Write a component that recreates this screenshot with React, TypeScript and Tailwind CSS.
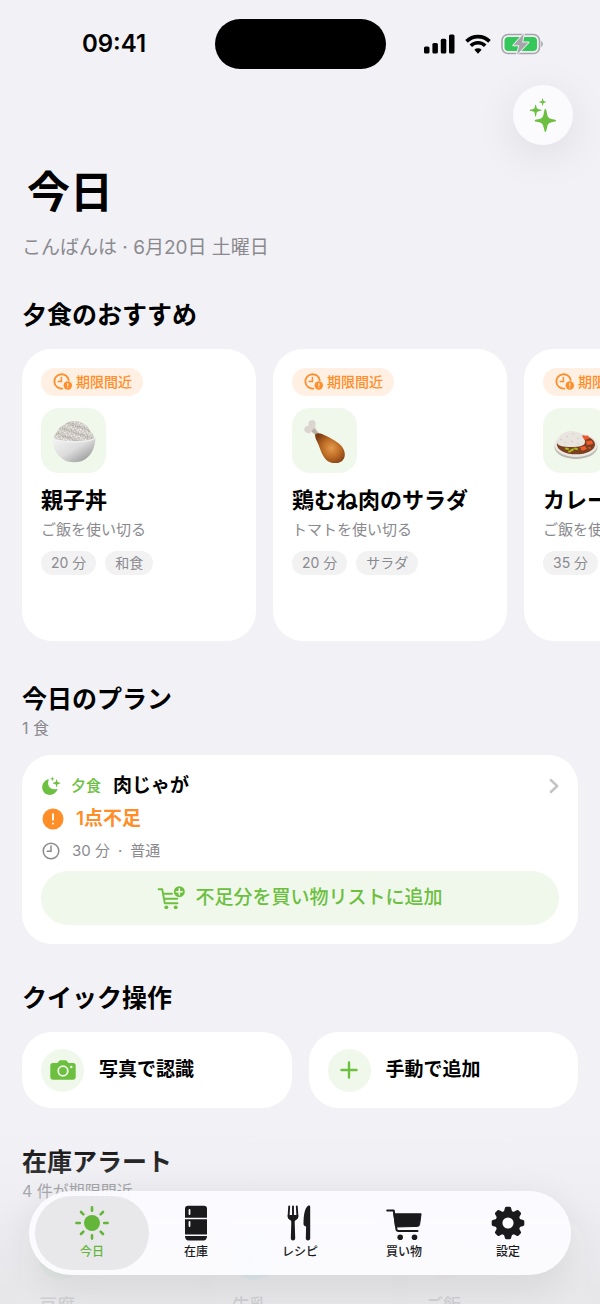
import React, { useState } from 'react';
import { Leaf, Milk, CupSoda } from 'lucide-react';

type IconProps = { className?: string };

interface Recipe {
  id: string;
  title: string;
  subtitle: string;
  tags: string[];
  art: React.ReactNode;
}

function Sparkles({ className }: IconProps) {
  return (
    <svg viewBox="0 0 28 36" fill="currentColor" className={className}>
      <path d="M16.500 11.500c.8 0 1.100 2.200 1.700 5 .9 4.300 1.900 5.300 6.100 6.100 2.300.5 3.500.7 3.500 1.400s-1.200.9-3.500 1.400c-4.200.8-5.200 1.800-6.100 6.100-.6 2.800-.9 4.500-1.700 4.500s-1.100-1.700-1.700-4.500c-.9-4.300-1.900-5.300-6.100-6.100-2.300-.5-3.500-.7-3.500-1.400s1.200-.9 3.500-1.400c4.200-.8 5.200-1.800 6.100-6.100.6-2.800.9-5 1.700-5z" />
      <path d="M6.200 7c.6 0 .8 3.300 1.500 4.200.8.800 4.800 1.200 4.800 1.800s-4 1-4.800 1.800c-.7.9-.9 5-1.500 5s-.8-4.100-1.500-5C3.900 14 0 13.600 0 13s3.900-1 4.700-1.800C5.400 10.300 5.600 7 6.200 7z" />
      <path d="M13.600.3c.4 0 .6 2.300 1 2.800.5.500 2.900.700 2.900 1.100s-2.400.6-2.900 1.100c-.4.5-.6 3-1 3s-.6-2.500-1-3c-.5-.5-2.800-.7-2.800-1.100s2.300-.6 2.800-1.100c.4-.5.6-2.800 1-2.800z" />
    </svg>
  );
}

function ClockAlert({ className }: IconProps) {
  return (
    <svg viewBox="0 0 20 18" fill="none" stroke="currentColor" strokeWidth="1.800" strokeLinecap="round" className={className}>
      <path d="M15.700 7.200A7.200 7.200 0 1 0 9.300 15.600" />
      <path d="M8.400 4.500V8.600H5.200" strokeWidth="1.500" />
      <circle cx="14.800" cy="12.500" r="4.200" fill="currentColor" stroke="none" />
      <path d="M14.800 10.300v2.500M14.800 14.500v.1" stroke="#fff0e3" strokeWidth="1.200" />
    </svg>
  );
}

// Scattered rice grains, clipped to the mound
const grains = Array.from({ length: 230 }, (_, i) => ({
  x: (i * 17.37) % 42 + 1,
  y: (i * 7.91) % 22 + 1,
  a: (i * 67) % 180,
  fill: ['#f1efeb', '#dedad5', '#aaa59e', '#e9e6e1'][i % 4],
}));

function RiceBowl() {
  return (
    <svg viewBox="0 0 44 44" className="size-11">
      <defs>
        <linearGradient id="bowl" x1="0" y1="0" x2="1" y2="1">
          <stop offset="0" stopColor="#f6f6f6" />
          <stop offset=".5" stopColor="#dcdcdc" />
          <stop offset="1" stopColor="#858585" />
        </linearGradient>
        <clipPath id="mound">
          <path d="M2 19c0-3 1.500-4 3-6 2-5 6-6 8-8 3-2 6-3 10-3 4 0 6 1 9 3 4 2 5 5 7 8 2 2 3 3 3 6 0 4-40 4-40 0z" />
        </clipPath>
      </defs>
      <g clipPath="url(#mound)">
        <rect width="44" height="24" fill="#c9c5bf" />
        {grains.map((g, i) => (
          <ellipse key={i} cx={g.x} cy={g.y} rx="1.200" ry=".5" fill={g.fill} transform={`rotate(${g.a} ${g.x} ${g.y})`} />
        ))}
      </g>
      <path d="M.5 17.500c0 3 9 5 21.500 5s21.500-2 21.500-5C43.500 30 38 38 31 41.500c-4 2.300-14 2.300-18 0C6 38 .5 30 .5 17.500z" fill="url(#bowl)" />
      <path d="M.5 17.500c0 3.500 9 5.500 21.500 5.500s21.500-2 21.500-5.500" fill="none" stroke="#f4f4f4" strokeWidth="1" />
    </svg>
  );
}

function Drumstick() {
  return (
    <svg viewBox="0 0 44 44" className="size-11">
      <defs>
        <radialGradient id="meat" cx=".55" cy=".5" r=".6">
          <stop offset="0" stopColor="#e39a4e" />
          <stop offset=".5" stopColor="#bd6c24" />
          <stop offset="1" stopColor="#7c3b12" />
        </radialGradient>
      </defs>
      <path d="M14 17 8.500 13c-2 2-6 1.500-7-1.500C.5 8.500 3 6.500 5.500 7c-.5-3 .5-6 3.500-6 3.500 0 4.500 3.500 3 7l4.500 7z" fill="#dcd5cf" />
      <path d="M8.500 12.500 14 17l2-2-5-6" fill="#b9aea6" />
      <path d="M12 15.500c2-1.600 4.500-1.800 7-.5 5 2.500 14 6 19.500 12 4.500 5.500 4 11.500 1 14.500-3.500 3.500-10.500 3.500-15 .5-6-5-7-12.500-10-18.500-1-2.500-2.500-4.500-2.500-8z" fill="url(#meat)" />
    </svg>
  );
}

function Curry() {
  return (
    <svg viewBox="0 0 44 44" className="size-11">
      <ellipse cx="22" cy="28" rx="21.500" ry="12" fill="#b9b5b1" />
      <ellipse cx="22" cy="26" rx="21.500" ry="12" fill="#ebe8e4" />
      <ellipse cx="22" cy="25.500" rx="19" ry="9.800" fill="#7b4020" />
      <path d="M3 23c1-6 6-11 14-11 9 0 14 5 14 11 0 4-6 5-14 5S3 27 3 23z" fill="#e9e5de" />
      <path d="M6 21l2-1M12 17l2 1M18 15l2-.5M23 19l2 1M10 24l2-1M17 22l2 1M25 24l-2 1" stroke="#d3cdc4" />
      <path d="M28 17l6-.5 1.500 3-5 1.500zM32 22l6-.5 1 3.500-6 1zM26 28l5-1 2 3-5 2zM34 28l3 .5-1 2z" fill="#ee5a2a" />
      <path d="M12 29.500l2 .5M17 31.500l2-1M21 29.500l2 .5M15 32.500h1" stroke="#a8b820" strokeWidth="2" strokeLinecap="round" />
    </svg>
  );
}

function MoonStars({ className }: IconProps) {
  return (
    <svg viewBox="0 0 20 20" fill="currentColor" className={className}>
      <path d="M7.200 3.200c.5-.2.8.2.6.6C5.400 9.800 9.600 14.700 16 13c.5-.1.800.2.600.6C15 17.200 12 19 8.900 19 4.500 19 1.200 15.700 1.200 11.300c0-3.700 2.300-6.800 6-8.100z" />
      <path d="M15.600 3.300c.4 0 .6 2.300 1 2.800.5.500 2.900.7 2.900 1.100s-2.400.6-2.900 1.100c-.4.5-.6 2.900-1 2.900s-.6-2.400-1-2.900c-.5-.5-2.900-.7-2.900-1.100s2.400-.6 2.900-1.100c.4-.5.6-2.800 1-2.800zM11.300.4c.2 0 .4 1.500.6 1.800.3.300 1.700.4 1.700.6s-1.400.4-1.700.6c-.2.300-.4 1.700-.6 1.700s-.4-1.400-.6-1.700c-.3-.2-1.700-.4-1.700-.6s1.400-.3 1.700-.6c.2-.3.400-1.800.6-1.800z" />
    </svg>
  );
}

function CartPlus({ className }: IconProps) {
  return (
    <svg viewBox="0 0 28 24" fill="none" stroke="currentColor" strokeWidth="1.900" strokeLinecap="round" strokeLinejoin="round" className={className}>
      <path d="M1.600 3.200H5.200L7.800 17.300H20.500M6 7.800H15M7 12.800H20.300" />
      <circle cx="9.300" cy="21.300" r="1.900" fill="currentColor" stroke="none" />
      <circle cx="18.700" cy="21.300" r="1.900" fill="currentColor" stroke="none" />
      <circle cx="22.300" cy="5.700" r="5.500" fill="currentColor" stroke="none" />
      <path d="M22.300 2.700v6M19.300 5.700h6" stroke="#f0f8ec" strokeWidth="1.600" />
    </svg>
  );
}

function Camera({ className }: IconProps) {
  return (
    <svg viewBox="0 0 26 20" className={className}>
      <path d="M3 3h4.500l1.300-1.800C9.300.6 10 .2 10.800.2h4.400c.8 0 1.500.400 2 1L18.500 3H23a2.700 2.700 0 0 1 2.700 2.700v11.100a2.900 2.900 0 0 1-2.900 2.900H3.200a2.900 2.900 0 0 1-2.900-2.900V5.700A2.700 2.700 0 0 1 3 3z" fill="currentColor" />
      <circle cx="13" cy="11" r="4.800" fill="none" stroke="#f0f8ec" strokeWidth="1.800" />
      <circle cx="21.300" cy="7" r="1.200" fill="#f0f8ec" />
    </svg>
  );
}

function Sun() {
  return (
    <svg viewBox="0 0 36 36" className="size-9" fill="currentColor" stroke="currentColor" strokeWidth="2.600" strokeLinecap="round">
      <circle cx="18" cy="18" r="8" stroke="none" />
      <path d="M18 2.400v3.400M18 30.200v3.400M2.400 18h3.400M30.200 18h3.400M7 7l2.400 2.400M26.600 26.600 29 29M7 29l2.400-2.400M26.600 9.400 29 7" />
    </svg>
  );
}

function Fridge() {
  return (
    <svg viewBox="0 0 36 36" className="size-9" fill="currentColor">
      <path d="M10 .8h16a3 3 0 0 1 3 3v8.900H7V3.800a3 3 0 0 1 3-3zM7 14.200h22v15.300H7zM7 31h22c0 2.700-1.200 4.500-3.500 4.500h-15C8.200 35.500 7 33.700 7 31z" />
      <path d="M11.500 5v4M11.500 17v4" stroke="#fbfbfe" strokeWidth="1.800" strokeLinecap="round" />
    </svg>
  );
}

function ForkKnife() {
  return (
    <svg viewBox="0 0 36 36" className="size-9" fill="currentColor">
      <path
        d="M7.200 1.500 6.600 11c-.1 2.200 1 3 4.400 3s4.500-.8 4.400-3l-.6-9.500M11 1.500V13"
        fill="none"
        stroke="currentColor"
        strokeWidth="1.900"
        strokeLinecap="round"
      />
      <path d="M5.800 10h10.400c.3 2.600-.7 4-2.300 5-.9.600-1.200 1.100-1.200 2.400l.5 15.800c0 1.300-.9 2.200-2.200 2.200s-2.200-.9-2.200-2.200l.5-15.800c0-1.300-.3-1.800-1.200-2.400-1.600-1-2.600-2.400-2.300-5z" />
      <path d="M26.300.6c1-.4 1.900.2 1.900 1.200v31.500c0 1.300-.8 2.200-2.200 2.200s-2.200-.9-2.200-2.200l.3-11.800c-1.200-.2-2.600-.9-2.600-2.500.1-8.500 1-15.600 4.800-18.400z" />
    </svg>
  );
}

function Cart() {
  return (
    <svg viewBox="0 0 36 36" className="size-9" fill="none" stroke="currentColor" strokeWidth="2" strokeLinecap="round" strokeLinejoin="round">
      <path d="M1.200 5.500h6.500L10.400 24.200c.2 1.200.8 1.900 2 1.900H31.500" />
      <path d="M8.300 8.800h26.800L33.600 19.500c-.2 1.200-.9 1.800-2.100 1.900L10 22z" fill="currentColor" strokeWidth="1" />
      <circle cx="14.200" cy="32.200" r="2.800" fill="currentColor" stroke="none" />
      <circle cx="28.500" cy="32.200" r="2.800" fill="currentColor" stroke="none" />
    </svg>
  );
}

function Gear() {
  return (
    <svg viewBox="0 0 36 36" className="size-9" fill="currentColor">
      {[0, 45, 90, 135, 180, 225, 270, 315].map((a) => (
        <path key={a} d="M13.500 8 15 2.800Q15.300 1.700 16.400 1.700h3.200q1.100 0 1.400 1.100L22.500 8z" transform={`rotate(${a} 18 18)`} />
      ))}
      <circle cx="18" cy="18" r="9.100" fill="none" stroke="currentColor" strokeWidth="7" />
    </svg>
  );
}

function Clock({ className }: IconProps) {
  return (
    <svg viewBox="0 0 18 18" fill="none" stroke="currentColor" strokeWidth="1.500" strokeLinecap="round" className={className}>
      <circle cx="9" cy="9" r="7.800" />
      <path d="M9 4v5.300H5.200" />
    </svg>
  );
}

const recipes: Recipe[] = [
  { id: 'oyakodon', title: '親子丼', subtitle: 'ご飯を使い切る', tags: ['20 分', '和食'], art: <RiceBowl /> },
  { id: 'salad', title: '鶏むね肉のサラダ', subtitle: 'トマトを使い切る', tags: ['20 分', 'サラダ'], art: <Drumstick /> },
  { id: 'curry', title: 'カレーライス', subtitle: 'ご飯を使い切る', tags: ['35 分', '和食'], art: <Curry /> },
];

const alerts = [
  { name: '豆腐', color: 'bg-[#cdebcf] text-[#58c060]', Icon: Leaf },
  { name: '牛乳', color: 'bg-[#b4f3fa] text-[#1fd0e6]', Icon: Milk },
  { name: 'ご飯', color: 'bg-[#fbe9e3] text-[#f0835c]', Icon: CupSoda },
];

const tabs = [
  { id: 'today', label: '今日', icon: <Sun /> },
  { id: 'stock', label: '在庫', icon: <Fridge /> },
  { id: 'recipes', label: 'レシピ', icon: <ForkKnife /> },
  { id: 'shopping', label: '買い物', icon: <Cart /> },
  { id: 'settings', label: '設定', icon: <Gear /> },
];

function StatusBar() {
  return (
    <div className="grid grid-cols-3 items-center pt-[19px]">
      <div className="pl-7 text-center text-2xl font-semibold">09:41</div>
      <div className="mx-auto h-[50px] w-[171px] rounded-full bg-black" />
      <div className="flex items-center justify-end gap-[10px] pr-14">
        <svg viewBox="0 0 31 20" className="h-5 w-[31px]">
          <rect x="0" y="12.500" width="5.500" height="7" rx="1.500" />
          <rect x="8.400" y="9" width="5.500" height="10.500" rx="1.500" />
          <rect x="16.800" y="4.800" width="5.500" height="14.700" rx="1.500" />
          <rect x="25" y=".5" width="5.500" height="19" rx="1.500" />
        </svg>
        <svg viewBox="0 0 26 20" className="h-5 w-[26px]" fill="none" stroke="#000" strokeWidth="3.600">
          <path d="M1.500 7.400a16.300 16.300 0 0 1 23 0" />
          <path d="M5.800 11.800a10.200 10.200 0 0 1 14.400 0" />
          <path d="M13 19.800l3.600-4a5.200 5.200 0 0 0-7.200 0z" fill="#000" stroke="none" />
        </svg>
        <svg viewBox="0 0 43 22" className="h-[22px] w-[43px]">
          <rect x="1" y="1.500" width="37.500" height="19" rx="6" fill="none" stroke="#a5a5aa" strokeWidth="1.600" />
          <rect x="3.500" y="4" width="32.500" height="14" rx="3.800" fill="#34c759" />
          <path d="M40.200 8c2.200.8 2.200 5.200 0 6z" fill="#a5a5aa" />
          <path d="M22.800 .8 12.300 12.300h6L16 21.500 27.500 9.500h-6.300z" fill="#a5a5aa" stroke="#f2f1f6" strokeWidth="1.800" strokeLinejoin="round" paintOrder="stroke" />
        </svg>
      </div>
    </div>
  );
}

function RecipeCard({ recipe }: { recipe: Recipe }) {
  return (
    <article className="h-[292px] w-[234px] shrink-0 rounded-[30px] bg-white p-[19px]">
      <div className="flex h-7 w-fit items-center gap-[3px] rounded-full bg-[#fff0e3] pl-3 pr-[11px] text-sm font-medium text-[#ff8d28]">
        <ClockAlert className="h-[18px] w-5" />
        期限間近
      </div>
      <div className="mt-3 flex size-[65px] items-center justify-center rounded-[18px] bg-[#f0f8ec]">{recipe.art}</div>
      <h3 className="mt-[13px] whitespace-nowrap text-[22px] font-bold leading-7">{recipe.title}</h3>
      <p className="mt-1 text-[15px] leading-6 text-[#8a8a8e]">{recipe.subtitle}</p>
      <div className="mt-[9px] flex gap-[9px]">
        {recipe.tags.map((tag) => (
          <span key={tag} className="flex h-6 items-center rounded-full bg-[#f2f2f3] px-[10px] text-sm text-[#8a8a8e]">
            {tag}
          </span>
        ))}
      </div>
    </article>
  );
}

function Heading({ title, note }: { title: string; note?: string }) {
  return (
    <div className="px-[22px]">
      <h2 className="text-[25px] font-bold leading-9">{title}</h2>
      {note && <p className="text-base leading-[22px] text-[#8a8a8e]">{note}</p>}
    </div>
  );
}

export default function App() {
  const [tab, setTab] = useState('today');

  return (
    <div className="relative h-screen overflow-hidden bg-[#f2f1f6] font-['Inter','Noto_Sans_CJK_JP',sans-serif] text-black" lang="ja">
      <StatusBar />
      <div className="mt-4 flex justify-end pr-[27px]">
        <button
          aria-label="AI"
          className="flex size-[60px] items-center justify-center rounded-full bg-[#fbfbfe] text-[#6cbf3f] shadow-[0_10px_44px_rgba(0,0,0,0.09)]"
        >
          <Sparkles className="h-[34px] w-7" />
        </button>
      </div>

      <header className="px-[22px]">
        <h1 className="mt-[17px] pl-[5px] text-[43px] font-bold leading-[60px]">今日</h1>
        <p className="mt-3 text-[19px] leading-7 text-[#8a8a8e]">こんばんは · 6月20日 土曜日</p>
      </header>

      <section className="mt-[35px]">
        <Heading title="夕食のおすすめ" />
        <div className="mt-4 flex gap-[17px] overflow-x-auto px-[22px] [scrollbar-width:none]">
          {recipes.map((r) => (
            <RecipeCard key={r.id} recipe={r} />
          ))}
        </div>
      </section>

      <section className="mt-10">
        <Heading title="今日のプラン" note="1 食" />
        <div className="mx-[22px] mt-4 rounded-[30px] bg-white p-[19px]">
          <div className="flex h-6 items-center">
            <MoonStars className="size-5 text-[#6cbf3f]" />
            <span className="ml-[10px] text-[15px] font-medium text-[#6cbf3f]">夕食</span>
            <span className="ml-3 text-[19px] font-bold">肉じゃが</span>
            <svg viewBox="0 0 10 16" className="ml-auto h-4 w-[10px]" fill="none" stroke="#c4c4c7" strokeWidth="2.400" strokeLinecap="round" strokeLinejoin="round">
              <path d="M1.800 2 8.200 8l-6.400 6" />
            </svg>
          </div>
          <div className="mt-[9px] flex h-6 items-center gap-3 text-[19px] font-semibold text-[#ff8d28]">
            <svg viewBox="0 0 22 22" className="ml-px size-[22px]">
              <circle cx="11" cy="11" r="10.500" fill="currentColor" />
              <path d="M11 6.200v5.600M11 15.400v.1" stroke="#fff" strokeWidth="1.900" strokeLinecap="round" />
            </svg>
            1点不足
          </div>
          <div className="mt-2 flex h-6 items-center gap-3 text-[15px] text-[#8a8a8e]">
            <Clock className="ml-px size-[18px]" />
            <div className="flex gap-2">
              <span>30 分</span>
              <span>·</span>
              <span>普通</span>
            </div>
          </div>
          <button className="mt-2 flex h-[54px] w-full items-center justify-center gap-[10px] rounded-full bg-[#f0f8ec] text-[19px] font-medium text-[#6cbf3f]">
            <CartPlus className="h-6 w-7" />
            不足分を買い物リストに追加
          </button>
        </div>
      </section>

      <section className="mt-9">
        <Heading title="クイック操作" />
        <div className="mx-[22px] mt-4 grid grid-cols-2 gap-[17px] text-[19px] font-bold">
          <button className="flex h-[76px] items-center gap-[15px] rounded-[30px] bg-white px-[19px]">
            <span className="flex size-[43px] items-center justify-center rounded-full bg-[#f0f8ec] text-[#6cbf3f]">
              <Camera className="h-5 w-[26px]" />
            </span>
            写真で認識
          </button>
          <button className="flex h-[76px] items-center gap-[15px] rounded-[30px] bg-white px-[19px]">
            <span className="flex size-[43px] items-center justify-center rounded-full bg-[#f0f8ec] text-[#6cbf3f]">
              <svg viewBox="0 0 18 18" className="size-[18px]" stroke="currentColor" strokeWidth="2.400" strokeLinecap="round">
                <path d="M9 1.500v15M1.500 9h15" />
              </svg>
            </span>
            手動で追加
          </button>
        </div>
      </section>

      <section className="mt-9">
        <Heading title="在庫アラート" note="4 件が期限間近" />
        <div className="mt-4 flex gap-4 overflow-x-auto px-[22px] [scrollbar-width:none]">
          {alerts.map(({ name, color, Icon }) => (
            <div key={name} className="h-40 w-[177px] shrink-0 rounded-[30px] bg-[#f8f8fa] px-[17px] pt-[18px]">
              <div className={`flex size-11 items-center justify-center rounded-full ${color}`}>
                <Icon size={24} />
              </div>
              <p className="mt-3 text-lg font-medium leading-7">{name}</p>
            </div>
          ))}
        </div>
      </section>

      {/* Fade behind the tab bar */}
      <div className="pointer-events-none absolute inset-x-0 bottom-0 h-44 bg-linear-to-b from-[#ececef]/0 via-[#e9e9ed]/35 via-40% to-[#e6e6e9]/90 to-90%" />

      <nav className="absolute inset-x-[29px] bottom-[29px] grid h-[84px] grid-cols-5 rounded-full bg-[#fcfcff]/94 px-[11px] py-[5px] shadow-[0_10px_40px_rgba(0,0,0,0.09)]">
        {tabs.map((item) => (
          <button
            key={item.id}
            onClick={() => setTab(item.id)}
            className={`-mx-[5px] flex flex-col items-center gap-px rounded-full pt-[9px] text-xs font-medium leading-5 ${
              tab === item.id ? 'bg-[#e8e8eb] text-[#64b63a]' : 'text-[#1a1a1c]'
            }`}
          >
            {item.icon}
            {item.label}
          </button>
        ))}
      </nav>
    </div>
  );
}
